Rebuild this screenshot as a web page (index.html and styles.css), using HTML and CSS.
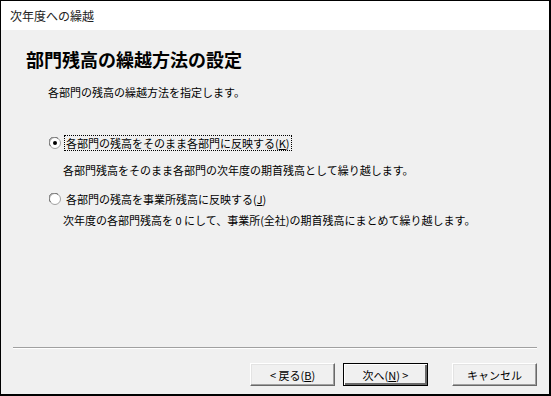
FILE: index.html
```html
<!DOCTYPE html>
<html lang="ja">
<head>
<meta charset="utf-8">
<title>次年度への繰越</title>
<link rel="stylesheet" href="styles.css">
</head>
<body>
<div class="window">
  <div class="titlebar">次年度への繰越</div>
  <div class="content">
    <h1 class="heading">部門残高の繰越方法の設定</h1>
    <p class="lead">各部門の残高の繰越方法を指定します。</p>
    <div class="options">
      <div class="option">
        <svg class="radio" width="12" height="12" viewBox="0 0 12 12">
          <circle cx="6" cy="6" r="5.5" fill="#fff" stroke="#a0a0a0"/>
          <path d="M1.5 9 A5 5 0 0 1 9 1.5" fill="none" stroke="#696969" stroke-width="1"/>
          <circle cx="6" cy="6" r="2" fill="#000"/>
        </svg>
        <span class="label focused">各部門の残高をそのまま各部門に反映する(<u>K</u>)</span>
      </div>
      <p class="desc">各部門残高をそのまま各部門の次年度の期首残高として繰り越します。</p>
      <div class="option second">
        <svg class="radio" width="12" height="12" viewBox="0 0 12 12">
          <circle cx="6" cy="6" r="5.5" fill="#fff" stroke="#a0a0a0"/>
          <path d="M1.5 9 A5 5 0 0 1 9 1.5" fill="none" stroke="#696969" stroke-width="1"/>
        </svg>
        <span class="label">各部門の残高を事業所残高に反映する(<u>J</u>)</span>
      </div>
      <p class="desc second-desc">次年度の各部門残高を 0 にして、事業所(全社)の期首残高にまとめて繰り越します。</p>
    </div>
    <div class="footer">
      <div class="separator"></div>
      <div class="buttons">
        <button class="btn">&lt; 戻る(<u>B</u>)</button>
        <button class="btn default">次へ(<u>N</u>) &gt;</button>
        <button class="btn cancel">キャンセル</button>
      </div>
    </div>
  </div>
</div>
</body>
</html>
```

FILE: styles.css
```css
html, body {
  margin: 0;
  padding: 0;
  height: 100%;
}
body {
  font-family: "Noto Sans CJK JP", "Noto Sans", sans-serif;
  color: #000;
  background: #f0f0f0;
}
.window {
  box-sizing: border-box;
  width: 551px;
  height: 396px;
  border-style: solid;
  border-color: #000;
  border-width: 1px 2px 2px 1px;
  display: flex;
  flex-direction: column;
}
.titlebar {
  height: 29px;
  line-height: 29px;
  background: #fff;
  padding-left: 9px;
  font-size: 12px;
  color: #222;
}
.content {
  flex: 1;
  background: #f0f0f0;
  display: flex;
  flex-direction: column;
}
.heading {
  margin: 17px 0 0 25px;
  font-size: 18px;
  line-height: 24px;
  font-weight: bold;
}
.lead {
  margin: 13px 0 0 47px;
  font-size: 11px;
  line-height: 16px;
}
.options {
  margin-left: 48px;
  margin-top: 35px;
}
.option {
  display: flex;
  align-items: center;
  gap: 3px;
  height: 16px;
}
.option.second {
  margin-top: 13px;
}
.radio {
  flex: none;
}
.label {
  font-size: 11px;
  line-height: 14px;
  padding: 0 1px;
  border: 1px dotted transparent;
}
.label.focused {
  border-color: #000;
}
.desc {
  margin: 11px 0 0 14px;
  font-size: 11px;
  line-height: 16px;
}
.desc.second-desc {
  margin-top: 5px;
}
.footer {
  margin-top: auto;
  padding: 0 12px 8px 12px;
}
.separator {
  height: 1px;
  background: #a0a0a0;
  border-bottom: 1px solid #fff;
}
.buttons {
  display: flex;
  justify-content: flex-end;
  margin-top: 14px;
}
.btn {
  box-sizing: border-box;
  width: 85px;
  height: 23px;
  margin: 0;
  padding: 0;
  font-family: "Noto Sans CJK JP", sans-serif;
  font-size: 11px;
  color: #000;
  background: #f0f0f0;
  border: 1px solid;
  border-color: #fff #696969 #696969 #fff;
  box-shadow: inset -1px -1px 0 #a0a0a0, inset 1px 1px 0 #e3e3e3;
}
.btn + .btn {
  margin-left: 8px;
}
.btn.default {
  border-color: #000;
  box-shadow: inset 1px 1px 0 #fff, inset -2px -2px 0 #696969;
}
.btn.cancel {
  margin-left: 24px;
}
u {
  text-decoration: underline;
}
```
